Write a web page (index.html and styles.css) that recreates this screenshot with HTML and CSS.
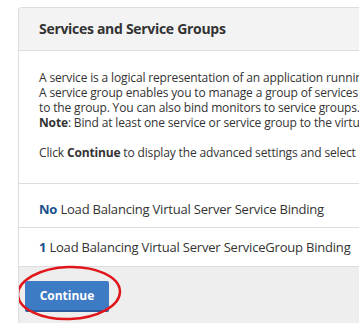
FILE: index.html
```html
<!DOCTYPE html>
<html lang="en">
<head>
    <meta charset="UTF-8">
    <title>Services and Service Groups</title>
    <link rel="stylesheet" href="styles.css">
</head>
<body>

    <!-- Panel -->
    <div class="panel">
        <div class="panel-header">Services and Service Groups</div>

        <div class="panel-body">
            <p>A service is a logical representation of an application running on a server.</p>
            <p>A service group enables you to manage a group of services as a single entity.</p>
            <p>to the group. You can also bind monitors to service groups.</p>
            <p><b>Note</b>: Bind at least one service or service group to the virtual server.</p>
            <p class="gap">Click <b>Continue</b> to display the advanced settings and select the features you want.</p>
        </div>

        <div class="binding-row first"><span class="count">No</span> Load Balancing Virtual Server Service Binding</div>
        <div class="binding-row"><span class="count">1</span> Load Balancing Virtual Server ServiceGroup Binding</div>

        <div class="panel-footer">
            <button class="button">Continue</button>
            <svg class="highlight" width="110" height="58" viewBox="0 0 110 58">
                <ellipse cx="55" cy="29" rx="51" ry="26" fill="none" stroke="#e0161b" stroke-width="2.5" transform="rotate(-2 55 29)"/>
            </svg>
        </div>
    </div>

</body>
</html>
```

FILE: styles.css
```css
/* General Styling */
* {
    margin: 0;
    padding: 0;
    box-sizing: border-box;
}

body {
    background-color: white;
    font-family: "Open Sans", Arial, sans-serif;
    color: #333333;
    padding: 7px 0 0 18px;
    overflow: hidden;
}

/* Panel */
.panel {
    width: 341px;
    border: 1px solid #dddddd;
    border-right: none;
    border-radius: 4px 0 0 0;
    overflow: hidden;
}

.panel-header {
    height: 43px;
    line-height: 42px;
    padding-left: 20px;
    background-color: #f3f3f3;
    border-bottom: 1px solid #dddddd;
    font-size: 14px;
    font-weight: bold;
    letter-spacing: -0.3px;
    white-space: nowrap;
}

.panel-body {
    padding: 19px 0 23px 20px;
    border-bottom: 1px solid #dddddd;
    font-size: 12px;
    line-height: 15px;
    letter-spacing: -0.15px;
    white-space: nowrap;
    overflow: hidden;
}

.panel-body .gap {
    margin-top: 15px;
}

.binding-row {
    height: 39px;
    line-height: 38px;
    padding-left: 20px;
    border-bottom: 1px solid #dddddd;
    font-size: 13px;
    letter-spacing: -0.2px;
    white-space: nowrap;
    overflow: hidden;
}

.binding-row.first {
    height: 44px;
    padding-top: 6px;
}

.binding-row .count {
    color: #1b4f8c;
    font-weight: bold;
}

/* Footer */
.panel-footer {
    position: relative;
    height: 56px;
    padding: 14px 0 0 6px;
    background-color: #eeeeee;
}

.button {
    width: 84px;
    height: 31px;
    background-color: #3d7bc4;
    color: white;
    border: none;
    border-bottom: 2px solid #2a5c9e;
    border-radius: 2px;
    font-family: "Open Sans", Arial, sans-serif;
    font-size: 12px;
    font-weight: bold;
}

.highlight {
    position: absolute;
    left: -5px;
    top: -3px;
}
```
